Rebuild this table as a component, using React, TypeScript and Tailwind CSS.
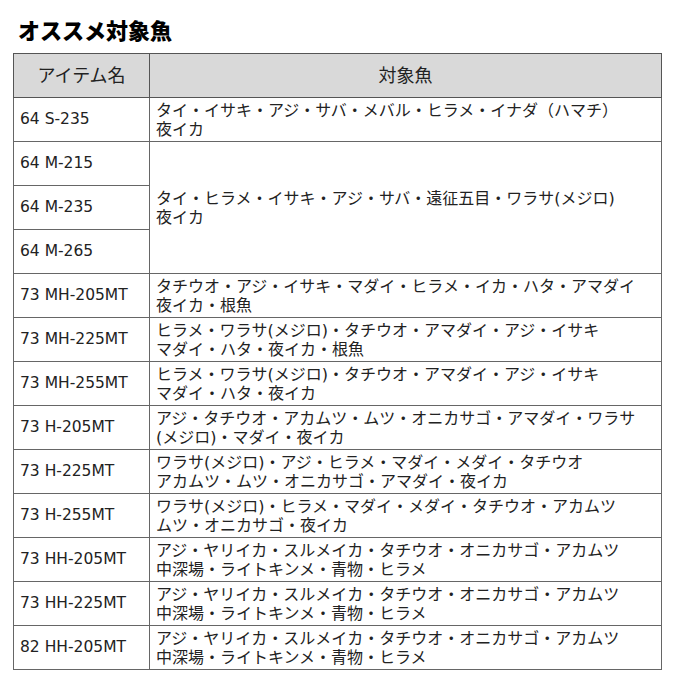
import React from 'react';

type Row = { name: string; fish?: string[]; span?: number };

const rows: Row[] = [
  { name: '64 S-235', fish: ['タイ・イサキ・アジ・サバ・メバル・ヒラメ・イナダ（ハマチ）', '夜イカ'] },
  { name: '64 M-215', fish: ['タイ・ヒラメ・イサキ・アジ・サバ・遠征五目・ワラサ(メジロ)', '夜イカ'], span: 3 },
  { name: '64 M-235' },
  { name: '64 M-265' },
  { name: '73 MH-205MT', fish: ['タチウオ・アジ・イサキ・マダイ・ヒラメ・イカ・ハタ・アマダイ', '夜イカ・根魚'] },
  { name: '73 MH-225MT', fish: ['ヒラメ・ワラサ(メジロ)・タチウオ・アマダイ・アジ・イサキ', 'マダイ・ハタ・夜イカ・根魚'] },
  { name: '73 MH-255MT', fish: ['ヒラメ・ワラサ(メジロ)・タチウオ・アマダイ・アジ・イサキ', 'マダイ・ハタ・夜イカ'] },
  { name: '73 H-205MT', fish: ['アジ・タチウオ・アカムツ・ムツ・オニカサゴ・アマダイ・ワラサ', '(メジロ)・マダイ・夜イカ'] },
  { name: '73 H-225MT', fish: ['ワラサ(メジロ)・アジ・ヒラメ・マダイ・メダイ・タチウオ', 'アカムツ・ムツ・オニカサゴ・アマダイ・夜イカ'] },
  { name: '73 H-255MT', fish: ['ワラサ(メジロ)・ヒラメ・マダイ・メダイ・タチウオ・アカムツ', 'ムツ・オニカサゴ・夜イカ'] },
  { name: '73 HH-205MT', fish: ['アジ・ヤリイカ・スルメイカ・タチウオ・オニカサゴ・アカムツ', '中深場・ライトキンメ・青物・ヒラメ'] },
  { name: '73 HH-225MT', fish: ['アジ・ヤリイカ・スルメイカ・タチウオ・オニカサゴ・アカムツ', '中深場・ライトキンメ・青物・ヒラメ'] },
  { name: '82 HH-205MT', fish: ['アジ・ヤリイカ・スルメイカ・タチウオ・オニカサゴ・アカムツ', '中深場・ライトキンメ・青物・ヒラメ'] },
];

export default function App() {
  return (
    <div
      className="w-[680px] h-[680px] bg-white text-[#222] overflow-hidden"
      style={{ fontFamily: '"DejaVu Sans", "Noto Sans CJK JP", sans-serif' }}
    >
      <h1
        className="pl-[18px] pt-[15px] h-[53px] text-[22px] leading-[28px] font-black text-black"
        style={{ fontFamily: '"Noto Sans CJK JP", sans-serif' }}
      >
        オススメ対象魚
      </h1>
      <table className="ml-[13px] w-[649px] border-collapse table-fixed">
        <colgroup>
          <col className="w-[136px]" />
          <col />
        </colgroup>
        <thead>
          <tr className="h-[44px] bg-[#d9d9d9]">
            <th className="border border-[#555] text-[18px] font-normal text-center">アイテム名</th>
            <th className="border border-[#555] text-[18px] font-normal text-center">対象魚</th>
          </tr>
        </thead>
        <tbody>
          {rows.map((r) => (
            <tr key={r.name} className="h-[44px]">
              <td className="border border-[#666] pl-[6px] text-[15.5px] leading-[19px] whitespace-nowrap">{r.name}</td>
              {r.fish && (
                <td
                  rowSpan={r.span}
                  className="border border-[#666] pl-[6px] text-[16px] leading-[19px] whitespace-nowrap"
                >
                  {r.fish.map((l, i) => (
                    <div key={i}>{l}</div>
                  ))}
                </td>
              )}
            </tr>
          ))}
        </tbody>
      </table>
    </div>
  );
}
